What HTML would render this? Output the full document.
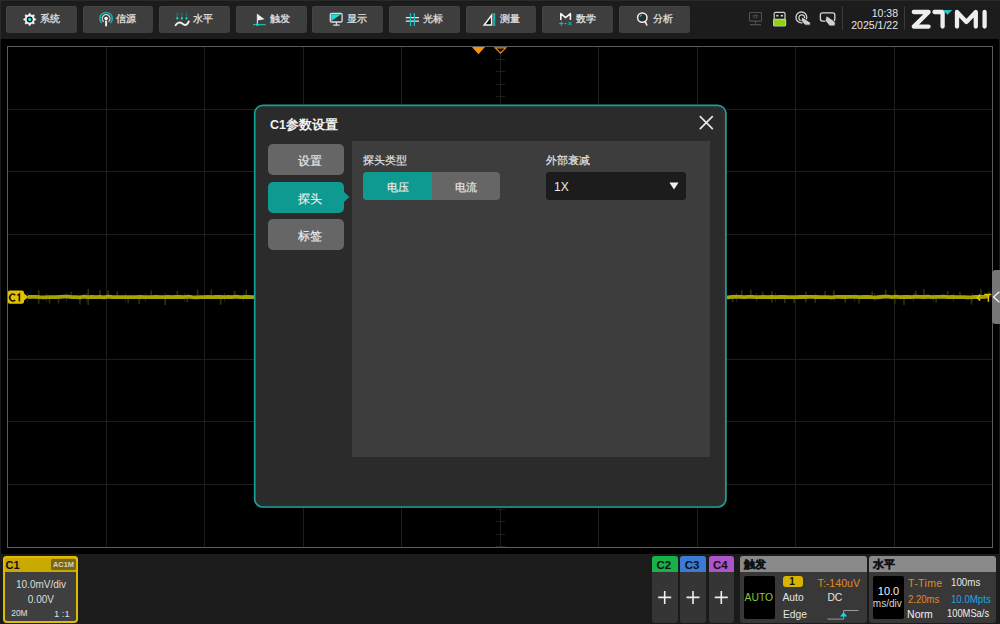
<!DOCTYPE html>
<html><head><meta charset="utf-8">
<style>
*{margin:0;padding:0;box-sizing:border-box}
html,body{width:1000px;height:624px;overflow:hidden;background:#000}
body{position:relative;font-family:"Liberation Sans",sans-serif;color:#ddd}
.a{position:absolute}
.topbar{left:0;top:0;width:1000px;height:39px;background:#1c1c1c}
.btn{top:6px;width:70.7px;height:27px;background:#3e3e3e;border-radius:3px;box-shadow:inset 1px 1px 0 #454545}
.bt{top:12px;font-size:10px;line-height:14px;color:#e4e4e4;white-space:nowrap;-webkit-text-stroke:0.25px #e4e4e4}
.sep{width:1px;background:#3a3a3a}
.botbar{left:0;top:554px;width:1000px;height:70px;background:#1b1b1b}
.lstrip{left:0;top:39px;width:1px;height:515px;background:#1b1b1b}
.rstrip{left:999px;top:39px;width:1px;height:515px;background:#1b1b1b}
.dlg{left:254px;top:104.6px;width:472.6px;height:403.2px;background:#2b2b2b;border-radius:9px}
.side{left:268px;width:76px;height:31px;border-radius:5px;background:#666;color:#eee;font-size:11.5px;line-height:34px;padding-left:8px;text-align:center;-webkit-text-stroke:0.15px #eee}
.panel{left:352px;top:140.6px;width:358px;height:316.2px;background:#3d3d3d}
.lbl{font-size:11px;line-height:14px;color:#e6e6e6;white-space:nowrap;-webkit-text-stroke:0.15px #e6e6e6}
.num{font-family:"Liberation Sans",sans-serif;white-space:nowrap;line-height:1}
.hb{-webkit-text-stroke:0.35px #111}
</style></head><body>
<!-- top bar -->
<div class="a topbar"></div>
<div class="a" style="left:0;top:0;width:1000px;height:1px;background:#2a2a2a"></div>
<div class="a" style="left:0;top:0;width:1px;height:39px;background:#2a2a2a"></div>
<div class="a lstrip"></div>
<div class="a rstrip"></div>
<div class="a botbar"></div>

<!-- toolbar buttons -->
<div class="a btn" style="left:6.00px"></div>
<div class="a btn" style="left:82.61px"></div>
<div class="a btn" style="left:159.22px"></div>
<div class="a btn" style="left:235.83px"></div>
<div class="a btn" style="left:312.44px"></div>
<div class="a btn" style="left:389.05px"></div>
<div class="a btn" style="left:465.66px"></div>
<div class="a btn" style="left:542.27px"></div>
<div class="a btn" style="left:618.88px"></div>

<div class="a bt" style="left:40px">系统</div>
<div class="a bt" style="left:116px">信源</div>
<div class="a bt" style="left:193px">水平</div>
<div class="a bt" style="left:269.5px">触发</div>
<div class="a bt" style="left:346.5px">显示</div>
<div class="a bt" style="left:422.5px">光标</div>
<div class="a bt" style="left:499.5px">测量</div>
<div class="a bt" style="left:575.5px">数学</div>
<div class="a bt" style="left:652.5px">分析</div>

<svg class="a" style="left:0;top:0" width="1000" height="40" viewBox="0 0 1000 40">
  <!-- gear -->
  <g transform="translate(29.7 19.4)">
    <path d="M0.00,-6.50 L1.68,-4.07 L4.60,-4.60 L4.07,-1.68 L6.50,0.00 L4.07,1.68 L4.60,4.60 L1.68,4.07 L0.00,6.50 L-1.68,4.07 L-4.60,4.60 L-4.07,1.68 L-6.50,0.00 L-4.07,-1.68 L-4.60,-4.60 L-1.68,-4.07 Z" fill="#f4f4f4" stroke="#f4f4f4" stroke-width="0.5" stroke-linejoin="round"/>
    <circle r="3.0" fill="#141414"/>
    <circle r="1.7" fill="#14e6e0"/>
  </g>
  <!-- source -->
  <g fill="none" stroke-linecap="round">
    <path d="M101.35,22.6 A6.2,6.2 0 1 1 110.85,22.6" stroke="#13b0a8" stroke-width="1.5"/>
    <path d="M103.34,21.36 A3.9,3.9 0 1 1 108.86,21.36" stroke="#e4e4e4" stroke-width="1.2"/>
    <path d="M106.1,21.6 V25.6" stroke="#f0f0f0" stroke-width="2"/>
  </g>
  <circle cx="106.1" cy="18.6" r="1.8" fill="#fff"/>
  <!-- horizontal -->
  <g stroke="#127a76" stroke-width="1.3">
    <path d="M177.3,12.8 V18"/><path d="M181.9,12.8 V18"/><path d="M186.5,12.8 V18"/>
  </g>
  <g fill="#1fd8d0"><circle cx="177.3" cy="18.4" r="1.1"/><circle cx="181.9" cy="18.4" r="1.1"/><circle cx="186.5" cy="18.4" r="1.1"/></g>
  <path d="M175.6,25.2 C177.4,22.4 180,21.8 182.2,23.6 S186.6,26.4 188.8,21.4" fill="none" stroke="#f0f0f0" stroke-width="1.9" stroke-linecap="round"/>
  <!-- trigger flag -->
  <path d="M257.1,13.8 L264.6,19.3 L257.1,20.4 Z" fill="#f0f0f0"/>
  <path d="M257.4,14 V23.5" stroke="#e8e8e8" stroke-width="1.1"/>
  <path d="M253,24.6 H265.8" stroke="#17b8b0" stroke-width="1.3"/>
  <circle cx="257.3" cy="24.6" r="1.3" fill="#1fd8d0"/>
  <!-- display -->
  <rect x="330.3" y="13.4" width="11.8" height="8.6" rx="1.2" fill="#363636" stroke="#ddd" stroke-width="1.3"/>
  <path d="M331.2,14.3 H341.2 L331.2,21.1 Z" fill="#14e0d6"/>
  <path d="M336.4,22 V24.4 M333.2,25.1 H339.6" stroke="#ddd" stroke-width="1.2"/>
  <!-- cursor -->
  <path d="M405.8,17.6 H419 M405.8,21.2 H419" stroke="#e8e8e8" stroke-width="1.2"/>
  <path d="M410.5,13.1 V26 M414.3,13.1 V26" stroke="#14c8c0" stroke-width="1.2"/>
  <!-- measure -->
  <path d="M484.2,25 L491.6,15.2 L491.6,25 Z" fill="#111" stroke="#f0f0f0" stroke-width="1.5" stroke-linejoin="miter"/>
  <path d="M494.2,13.1 V26" stroke="#14b8b0" stroke-width="2"/>
  <!-- math -->
  <path d="M560.8,20 V13.6 L565.6,17.6 L570.4,13.6 V20" fill="none" stroke="#f2f2f2" stroke-width="1.6" stroke-linejoin="round"/>
  <path d="M559.2,23.6 H563.4 M561.3,21.5 V25.7 M564.6,23.6 H566.6 M568.2,21.9 L571.6,25.3 M571.6,21.9 L568.2,25.3" stroke="#17c8b8" stroke-width="1"/>
  <!-- analyse -->
  <circle cx="642.3" cy="17.6" r="4.7" fill="#2c2c2c" stroke="#f0f0f0" stroke-width="1.5"/>
  <path d="M645.2,21.6 L646.8,25" stroke="#f0f0f0" stroke-width="1.6" stroke-linecap="round"/>
  <path d="M639.9,16.8 A2.9,2.9 0 0 1 641.8,14.8" fill="none" stroke="#14b8a8" stroke-width="1.3"/>

  <!-- status icons -->
  <g fill="none" stroke="#505050" stroke-width="1.1">
    <rect x="749.5" y="12.5" width="12" height="8.6" rx="0.8"/>
    <path d="M755.5,21.1 V23.8 M750,24.6 H761"/>
    <path d="M752.7,16.5 A3.6,3.6 0 0 1 758.3,16.5 M753.9,17.8 A2,2 0 0 1 757.1,17.8"/>
  </g>
  <rect x="774.2" y="12.4" width="10.8" height="7.4" rx="1.2" fill="#1c1c1c" stroke="#cfcfcf" stroke-width="1.2"/>
  <rect x="776.2" y="14.9" width="2.2" height="1.6" fill="#d0d0d0"/><rect x="780.8" y="14.9" width="2.2" height="1.6" fill="#d0d0d0"/>
  <rect x="773.6" y="19.4" width="12" height="6.4" rx="0.8" fill="#8fd40a" stroke="#c4c4cc" stroke-width="1.2"/>
  <circle cx="801.4" cy="17.4" r="5.4" fill="none" stroke="#cfcfcf" stroke-width="1.3"/>
  <circle cx="801.8" cy="17.8" r="2.9" fill="none" stroke="#cfcfcf" stroke-width="1.2"/>
  <path d="M801.8,16.8 L807.2,20.4 L810.6,22.6 L810.2,25.2 L805,25.2 L801.2,20.6 Z" fill="#cfcfcf" stroke="#1c1c1c" stroke-width="0.9" stroke-linejoin="round"/>
  <rect x="820.4" y="12.9" width="14.4" height="8.2" rx="2" fill="none" stroke="#d8d8d8" stroke-width="1.3"/>
  <path d="M826.4,15.6 L832.4,19.8 L835.4,22.4 L835,26 L829.4,26 L825.2,20.6 Z" fill="#d0d0d0" stroke="#1c1c1c" stroke-width="0.9" stroke-linejoin="round"/>
  <!-- separators -->
  <path d="M842.5,6.5 V29.6 M904.5,6.5 V29.6" stroke="#3c3c3c" stroke-width="1"/>
  <!-- logo -->
  <g fill="none" stroke="#eeeeee" stroke-width="4.3" stroke-linecap="round" stroke-linejoin="round">
    <path d="M913.8,12 H928.6 L913.8,26.6 H928.6"/>
    <path d="M934.5,12 H942.6 V26.6"/>
    <path d="M957,26.6 V12 L966.4,22 L975.8,12 V26.6"/>
    <path d="M984.6,12 V26.6"/>
  </g>
  <path d="M942.8,10 H952.3 L947.5,14.8 Z" fill="#19c9c9"/>
</svg>

<div class="a num" style="right:102px;top:8px;font-size:10.5px;color:#e4e4e4;text-align:right">10:38</div>
<div class="a num" style="right:102px;top:20px;font-size:10.5px;color:#e4e4e4;text-align:right">2025/1/22</div>

<!-- grid -->
<svg class="a" style="left:0;top:0" width="1000" height="554" viewBox="0 0 1000 554">
  <g stroke="#1d1d1d" stroke-width="1">
    <path d="M106.5,47 V547"/><path d="M204.5,47 V547"/><path d="M303.5,47 V547"/><path d="M401.5,47 V547"/><path d="M500.5,47 V547"/><path d="M598.5,47 V547"/><path d="M697.5,47 V547"/><path d="M795.5,47 V547"/><path d="M894.5,47 V547"/>
    <path d="M8,109.5 H992"/><path d="M8,171.5 H992"/><path d="M8,234.5 H992"/><path d="M8,296.5 H992"/><path d="M8,359.5 H992"/><path d="M8,421.5 H992"/><path d="M8,484.5 H992"/>
  </g>
  <g stroke="#1e1e1e" stroke-width="1"><path d="M496,59.5 H505 M496,71.5 H505 M496,84.5 H505 M496,96.5 H505 M496,109.5 H505 M496,121.5 H505 M496,134.5 H505 M496,146.5 H505 M496,159.5 H505 M496,171.5 H505 M496,184.5 H505 M496,196.5 H505 M496,209.5 H505 M496,221.5 H505 M496,234.5 H505 M496,246.5 H505 M496,259.5 H505 M496,271.5 H505 M496,284.5 H505 M496,296.5 H505 M496,309.5 H505 M496,321.5 H505 M496,334.5 H505 M496,346.5 H505 M496,359.5 H505 M496,371.5 H505 M496,384.5 H505 M496,396.5 H505 M496,409.5 H505 M496,421.5 H505 M496,434.5 H505 M496,446.5 H505 M496,459.5 H505 M496,471.5 H505 M496,484.5 H505 M496,496.5 H505 M496,509.5 H505 M496,521.5 H505 M496,534.5 H505 M496,546.5 H505 M496,559.5 H505 M496,571.5 H505 M496,584.5 H505 M496,596.5 H505 M496,609.5 H505 M496,621.5 H505 M496,634.5 H505 M496,646.5 H505 M496,659.5 H505 M27.5,293 V302 M46.5,293 V302 M66.5,293 V302 M86.5,293 V302 M106.5,293 V302 M125.5,293 V302 M145.5,293 V302 M165.5,293 V302 M184.5,293 V302 M204.5,293 V302 M224.5,293 V302 M243.5,293 V302 M263.5,293 V302 M283.5,293 V302 M303.5,293 V302 M322.5,293 V302 M342.5,293 V302 M362.5,293 V302 M381.5,293 V302 M401.5,293 V302 M421.5,293 V302 M440.5,293 V302 M460.5,293 V302 M480.5,293 V302 M500.5,293 V302 M519.5,293 V302 M539.5,293 V302 M559.5,293 V302 M578.5,293 V302 M598.5,293 V302 M618.5,293 V302 M637.5,293 V302 M657.5,293 V302 M677.5,293 V302 M697.5,293 V302 M716.5,293 V302 M736.5,293 V302 M756.5,293 V302 M775.5,293 V302 M795.5,293 V302 M815.5,293 V302 M834.5,293 V302 M854.5,293 V302 M874.5,293 V302 M894.5,293 V302 M913.5,293 V302 M933.5,293 V302 M953.5,293 V302 M972.5,293 V302"/></g>
  <rect x="7.5" y="46.5" width="985" height="501" fill="none" stroke="#5c5c5c" stroke-width="1"/>
  <!-- trigger position markers -->
  <path d="M472,47 H485 L478.5,54.3 Z" fill="#f5920f"/>
  <path d="M495.2,47.8 H505.8 L500.5,53.2 Z" fill="none" stroke="#e88a14" stroke-width="1.2"/>
  <!-- trace -->
  <path d="M38.7,290.3V303.7M49.5,297V303.5M58.6,297V303.5M71.4,297V291.7M79.9,297V304.4M88.2,289.1V304.9M100.1,297V290.2M108.2,297V290.4M117.3,297V291.3M128.1,297V303.3M139.2,297V303.9M151.2,297V290.6M165.2,297V305.0M177.4,297V291.1M187.2,297V302.2M197.6,297V289.5M211.3,297V289.5M220.6,297V304.7M234.5,297V290.8M246.2,297V289.7M254.8,291.0V303.0M267.3,297V291.6M732.6,297V302.2M741.7,297V290.3M750.8,297V289.8M762.7,297V291.7M772.0,291.2V302.8M784.8,297V302.9M794.0,297V303.2M805.9,291.7V302.3M815.2,297V302.8M825.1,297V291.1M833.7,297V290.3M845.3,297V303.1M859.0,297V303.5M872.2,297V291.5M885.7,297V289.5M894.8,289.8V304.2M904.0,297V304.9M915.6,297V290.7M923.9,297V289.1M936.1,297V302.8M947.7,297V291.1M960.0,297V291.8M971.4,297V304.6M981.0,297V289.2M989.1,297V291.2M997.5,297V291.5" stroke="#323100" stroke-width="1.6" fill="none"/>
  <path d="M28,297.0 L32,296.8 L36,296.9 L40,297.2 L44,297.3 L48,297.1 L52,297.1 L56,297.1 L60,296.8 L64,296.7 L68,296.7 L72,297.2 L76,297.1 L80,297.3 L84,296.7 L88,297.1 L92,297.0 L96,297.1 L100,296.9 L104,297.3 L108,296.7 L112,297.0 L116,297.1 L120,297.2 L124,297.1 L128,297.1 L132,297.2 L136,297.2 L140,296.9 L144,297.1 L148,297.2 L152,297.2 L156,297.0 L160,297.2 L164,297.2 L168,297.0 L172,297.1 L176,296.9 L180,297.0 L184,297.1 L188,296.7 L192,297.1 L196,297.3 L200,297.2 L204,297.1 L208,296.9 L212,297.1 L216,297.0 L220,297.0 L224,297.2 L228,296.8 L232,297.2 L236,296.7 L240,297.1 L244,297.0 L248,296.8 L252,297.1 L256,297.0 M724,297.1 L728,297.3 L732,296.9 L736,296.7 L740,296.9 L744,297.1 L748,296.8 L752,296.8 L756,297.2 L760,297.1 L764,297.0 L768,297.2 L772,296.9 L776,297.1 L780,296.8 L784,297.0 L788,297.2 L792,297.2 L796,297.2 L800,296.9 L804,297.0 L808,296.9 L812,296.8 L816,297.0 L820,297.2 L824,297.2 L828,297.1 L832,297.3 L836,296.9 L840,296.8 L844,297.0 L848,296.9 L852,296.8 L856,296.9 L860,297.1 L864,297.0 L868,296.9 L872,297.2 L876,297.3 L880,297.0 L884,296.7 L888,296.7 L892,297.2 L896,296.7 L900,297.1 L904,297.0 L908,296.9 L912,297.2 L916,296.7 L920,296.8 L924,297.0 L928,296.7 L932,297.2 L936,296.8 L940,296.8 L944,296.7 L948,297.1 L952,297.0 L956,297.1 L960,297.1 L964,297.2 L968,297.3 L972,297.1 L976,296.8 L980,297.0 L984,296.8 L988,296.7" stroke="#a6a400" stroke-width="3.8" fill="none" stroke-linejoin="round"/>
  <rect x="7.8" y="290.5" width="16.2" height="13.2" rx="2" fill="#e3c200"/>
  <path d="M24,293.6 L28.6,297.1 L24,300.6 Z" fill="#d8c000"/>
  <path d="M980.2,294.6 L977.2,297.6 L980.2,300.6 M984.2,294.6 H991.4 M988.4,294.6 V301.8" stroke="#e8c400" stroke-width="1.5" fill="none"/>
</svg>
<svg class="a" style="left:0;top:280px" width="30" height="30" viewBox="0 280 30 30">
  <path d="M15.2,295.2 A3.1,3.5 0 1 0 15.2,299.9" fill="none" stroke="#1e1a00" stroke-width="1.6"/>
  <path d="M17.4,295.3 L19.4,294 V301.4" fill="none" stroke="#1e1a00" stroke-width="1.6"/>
</svg>
<!-- side tab -->
<div class="a" style="left:991.5px;top:270px;width:14px;height:54px;background:#777;border-radius:4px"></div>
<svg class="a" style="left:990px;top:288px" width="10" height="18" viewBox="0 0 10 18">
  <path d="M9.4,3.8 L3.6,9 L9.4,14.2" fill="none" stroke="#f4f4f4" stroke-width="1.3"/>
</svg>

<!-- dialog -->
<div class="a dlg"></div>
<svg class="a" style="left:0;top:0" width="1000" height="624" viewBox="0 0 1000 624"><rect x="254.7" y="105.4" width="471.1" height="401.6" rx="8" fill="none" stroke="#16a096" stroke-width="1.7"/></svg>
<div class="a" style="left:270px;top:117px;font-size:12.5px;line-height:16px;font-weight:bold;color:#f2f2f2;white-space:nowrap">C1参数设置</div>
<svg class="a" style="left:695px;top:112px" width="22" height="22" viewBox="0 0 22 22">
  <path d="M4.8,4.2 L17.8,17.2 M17.8,4.2 L4.8,17.2" stroke="#e6e6e6" stroke-width="1.7"/>
</svg>
<div class="a side" style="top:143.7px">设置</div>
<div class="a side" style="top:181.5px;background:#0e9a90">探头</div>
<svg class="a" style="left:343px;top:190px" width="8" height="14" viewBox="0 0 8 14"><path d="M0,1 L6.4,7 L0,13 Z" fill="#0e9a90"/></svg>
<div class="a side" style="top:218.7px">标签</div>
<div class="a panel"></div>
<div class="a lbl" style="left:363px;top:153px">探头类型</div>
<div class="a" style="left:363px;top:171.7px;width:136.6px;height:28.3px;border-radius:4px;overflow:hidden;background:#666">
  <div class="a" style="left:0;top:0;width:68.6px;height:28.3px;background:#0e9a90"></div>
</div>
<div class="a lbl" style="left:386.5px;top:179.5px;color:#f2f2f2">电压</div>
<div class="a lbl" style="left:455.3px;top:179.5px;color:#ececec">电流</div>
<div class="a lbl" style="left:546px;top:153px">外部衰减</div>
<div class="a" style="left:546px;top:172px;width:139.6px;height:27.6px;border-radius:3px;background:#1c1c1c"></div>
<div class="a num" style="left:554px;top:181px;font-size:12px;color:#eaeaea">1X</div>
<svg class="a" style="left:668px;top:181px" width="12" height="10" viewBox="0 0 12 10"><path d="M1.4,1.4 H10.6 L6,8.6 Z" fill="#eeeeee"/></svg>

<!-- bottom: C1 -->
<div class="a" style="left:3px;top:556px;width:74.6px;height:67px;border:2px solid #dcbc00;border-radius:4px;background:#3f3f3f"></div>
<div class="a" style="left:3px;top:556px;width:74.6px;height:16px;border:2px solid #dcbc00;border-bottom:0;background:#c9a800;border-radius:4px 4px 0 0"></div>
<div class="a num" style="left:5.6px;top:560px;font-size:11px;font-weight:bold;color:#111">C1</div>
<div class="a" style="left:51px;top:558.5px;width:24.8px;height:11px;background:#7b6518;border-radius:1.5px"></div>
<div class="a num" style="left:52.6px;top:561px;font-size:8px;font-weight:bold;transform:scaleX(0.92);transform-origin:0 0;color:#dcd4b4">AC1M</div>
<div class="a num" style="left:16px;top:579.6px;font-size:10px;color:#dcdcdc">10.0mV/div</div>
<div class="a num" style="left:27.8px;top:594.5px;font-size:10px;color:#dcdcdc">0.00V</div>
<div class="a num" style="left:11.3px;top:609.4px;font-size:8.4px;color:#e0e0e0">20M</div>
<div class="a num" style="left:53.9px;top:608.8px;font-size:9.5px;color:#dcdcdc">1 :1</div>

<!-- C2 C3 C4 -->
<div class="a" style="left:652px;top:556px;width:25.5px;height:66.5px;background:#353535;border-radius:3px"></div>
<div class="a" style="left:652px;top:556px;width:25.5px;height:16px;background:#17b34a;border-radius:3px 3px 0 0"></div>
<div class="a" style="left:680.3px;top:556px;width:25.5px;height:66.5px;background:#353535;border-radius:3px"></div>
<div class="a" style="left:680.3px;top:556px;width:25.5px;height:16px;background:#3b7bd6;border-radius:3px 3px 0 0"></div>
<div class="a" style="left:708.6px;top:556px;width:25.5px;height:66.5px;background:#353535;border-radius:3px"></div>
<div class="a" style="left:708.6px;top:556px;width:25.5px;height:16px;background:#ad55c8;border-radius:3px 3px 0 0"></div>
<div class="a num" style="left:656.5px;top:560.3px;font-size:11.5px;font-weight:bold;color:#111">C2</div>
<div class="a num" style="left:684.8px;top:560.3px;font-size:11.5px;font-weight:bold;color:#111">C3</div>
<div class="a num" style="left:713px;top:560.3px;font-size:11.5px;font-weight:bold;color:#111">C4</div>
<svg class="a" style="left:640px;top:580px" width="100" height="40" viewBox="640 580 100 40">
  <path d="M658.2,597.4 H671.2 M664.7,590.9 V603.9 M686.5,597.4 H699.5 M693,590.9 V603.9 M714.8,597.4 H727.8 M721.3,590.9 V603.9" stroke="#eeeeee" stroke-width="1.6"/>
</svg>

<!-- trigger box -->
<div class="a" style="left:739.7px;top:556px;width:127px;height:66.5px;background:#383838;border-radius:3px"></div>
<div class="a" style="left:739.7px;top:556px;width:127px;height:16px;background:#8a8a8a;border-radius:3px 3px 0 0"></div>
<div class="a" style="left:743.8px;top:557.4px;font-size:10.5px;line-height:14px;font-weight:bold;color:#111;-webkit-text-stroke:0.4px #111">触发</div>
<div class="a" style="left:743.8px;top:576px;width:31px;height:43px;background:#000;border-radius:2px"></div>
<div class="a num" style="left:744.6px;top:592.5px;font-size:10.3px;color:#8ec63a">AUTO</div>
<div class="a" style="left:782.9px;top:575.6px;width:20.3px;height:11.5px;background:#d8b400;border-radius:3px"></div>
<div class="a num" style="left:789.3px;top:577px;font-size:10px;font-weight:bold;color:#111">1</div>
<div class="a num" style="left:817.6px;top:577.5px;font-size:10.6px;color:#e08a22">T:-140uV</div>
<div class="a num" style="left:782.5px;top:592.5px;font-size:10.3px;color:#e4e4e4">Auto</div>
<div class="a num" style="left:827.4px;top:592.5px;font-size:10.3px;color:#e4e4e4">DC</div>
<div class="a num" style="left:782.9px;top:609.5px;font-size:10.3px;color:#e4e4e4">Edge</div>
<svg class="a" style="left:820px;top:605px" width="45" height="18" viewBox="820 605 45 18">
  <path d="M827.4,619.1 H843.6 V610.5 H858.5" fill="none" stroke="#9a9a9a" stroke-width="1"/>
  <path d="M840,616.6 L843.6,612 L847.2,616.6 Z" fill="#14d8e0"/>
</svg>

<!-- horizontal box -->
<div class="a" style="left:868.8px;top:556px;width:127.2px;height:66.5px;background:#383838;border-radius:3px"></div>
<div class="a" style="left:868.8px;top:556px;width:127.2px;height:16px;background:#8a8a8a;border-radius:3px 3px 0 0"></div>
<div class="a" style="left:873.1px;top:557.4px;font-size:10.5px;line-height:14px;font-weight:bold;color:#111;-webkit-text-stroke:0.4px #111">水平</div>
<div class="a" style="left:872.8px;top:576px;width:31px;height:43px;background:#000;border-radius:2px"></div>
<div class="a num" style="left:877.8px;top:586px;font-size:11px;color:#f0f0f0">10.0</div>
<div class="a num" style="left:872.8px;top:599px;font-size:10px;color:#d8d8d8">ms/div</div>
<div class="a num" style="left:907.9px;top:578px;font-size:10.5px;letter-spacing:0.4px;color:#e08a22">T-Time</div>
<div class="a num" style="left:950.7px;top:577.4px;font-size:10.5px;transform:scaleX(0.93);transform-origin:0 0;color:#e4e4e4">100ms</div>
<div class="a num" style="left:907.5px;top:594px;font-size:10.5px;transform:scaleX(0.91);transform-origin:0 0;color:#e08a22">2.20ms</div>
<div class="a num" style="left:950.7px;top:594px;font-size:10.5px;transform:scaleX(0.92);transform-origin:0 0;color:#1ea6e0">10.0Mpts</div>
<div class="a num" style="left:907.1px;top:609px;font-size:10.5px;color:#f0f0f0">Norm</div>
<div class="a num" style="left:946.7px;top:608.2px;font-size:10.5px;transform:scaleX(0.89);transform-origin:0 0;color:#f0f0f0">100MSa/s</div>
</body></html>
